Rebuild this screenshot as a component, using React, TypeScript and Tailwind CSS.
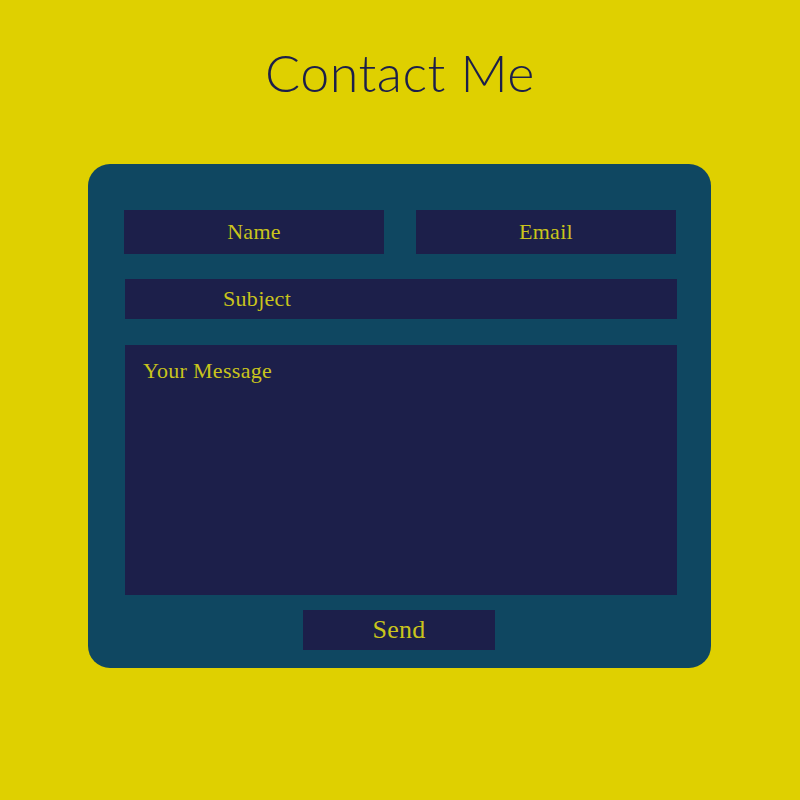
import { useState } from 'react';

const fieldFont = { fontFamily: '"Liberation Serif", "DejaVu Serif", serif' };

export default function App() {
  const [form, setForm] = useState({ name: '', email: '', subject: '', message: '' });

  const update = (key: keyof typeof form) => (e: { target: { value: string } }) =>
    setForm({ ...form, [key]: e.target.value });

  return (
    <div className="min-h-[800px] w-[800px] bg-[#dfd000] pt-[46px]">
      <h1
        className="text-center text-[52px] leading-[52px] font-light text-[#1c1f4a] tracking-[0.5px]"
        style={{ fontFamily: 'Lato, "Open Sans", sans-serif' }}
      >
        Contact Me
      </h1>

      <form
        onSubmit={(e) => e.preventDefault()}
        className="ml-[88px] mt-[66px] flex h-[504px] w-[623px] flex-col rounded-[22px] bg-[#0f4761] pt-[46px]"
        style={fieldFont}
      >
        <div className="flex gap-[32px] pl-[36px] pr-[35px]">
          <input
            value={form.name}
            onChange={update('name')}
            placeholder="Name"
            className="h-[44px] w-[260px] bg-[#1c1f4a] text-center text-[22px] leading-[28px] tracking-[0.3px] text-[#c9c41c] placeholder:text-[#c9c41c] outline-none"
          />
          <input
            value={form.email}
            onChange={update('email')}
            placeholder="Email"
            className="h-[44px] w-[260px] bg-[#1c1f4a] text-center text-[22px] leading-[28px] tracking-[0.3px] text-[#c9c41c] placeholder:text-[#c9c41c] outline-none"
          />
        </div>

        <div className="mt-[25px] flex flex-col gap-[26px] pl-[37px] pr-[34px]">
          <input
            value={form.subject}
            onChange={update('subject')}
            placeholder="Subject"
            className="h-[40px] w-full bg-[#1c1f4a] pl-[98px] text-[22px] leading-[28px] tracking-[0.3px] text-[#c9c41c] placeholder:text-[#c9c41c] outline-none"
          />
          <textarea
            value={form.message}
            onChange={update('message')}
            placeholder="Your Message"
            className="h-[250px] w-full resize-none bg-[#1c1f4a] pl-[18px] pt-[12px] text-[22px] leading-[28px] tracking-[0.3px] text-[#c9c41c] placeholder:text-[#c9c41c] outline-none"
          />
        </div>

        <div className="mt-[15px] flex justify-center pr-[1px]">
          <button
            type="submit"
            className="h-[40px] w-[192px] bg-[#1c1f4a] text-[26px] leading-[40px] tracking-[0.3px] text-[#c9c41c]"
          >
            Send
          </button>
        </div>
      </form>
    </div>
  );
}
